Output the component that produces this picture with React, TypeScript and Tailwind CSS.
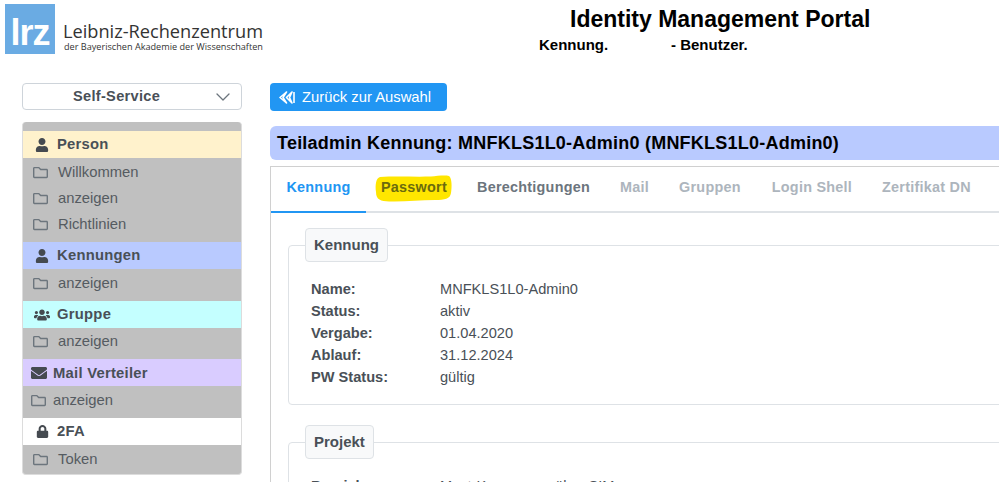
import { FaUser, FaUsers, FaEnvelope, FaLock, FaRegFolder } from "react-icons/fa";
import { ChevronDown } from "lucide-react";
import type { ReactNode } from "react";

const sans = "font-['Liberation_Sans',Arial,sans-serif]";

function Head({ icon, label, bg, tight }: { icon: ReactNode; label: string; bg: string; tight?: boolean }) {
  return (
    <div className={`flex h-[27px] items-center ${bg} text-[14.8px] font-bold tracking-[0.25px] text-[#495057] ${tight ? "gap-[6px] pt-[1px] pl-[8px]" : "gap-[7px] pl-[11px]"}`}>
      <span className="flex w-[16px] justify-center text-[#454a50]">{icon}</span>
      <span>{label}</span>
    </div>
  );
}

function Item({ label, h, tight }: { label: string; h: string; tight?: boolean }) {
  return (
    <div className={`flex items-center text-[14.8px] text-[#555b61] ${h} ${tight ? "gap-[7px] pl-[8px]" : "gap-[10px] pl-[10px]"}`}>
      <FaRegFolder className="h-[15px] w-[15px] text-[#6c757d]" />
      <span>{label}</span>
    </div>
  );
}

function Row({ k, v }: { k: string; v: string }) {
  return (
    <div className="flex h-[22px] items-center text-[14.6px] text-[#495057]">
      <span className="w-[129px] font-bold">{k}</span>
      <span>{v}</span>
    </div>
  );
}

function Legend({ children }: { children: ReactNode }) {
  return (
    <legend className="-ml-[6px] h-[34px] rounded-[4px] border border-[#dee2e6] bg-[#f8f9fa] px-[8px] text-[15px] leading-[32px] font-bold text-[#495057]">
      {children}
    </legend>
  );
}

export default function App() {
  return (
    <div className={`h-[482px] w-[999px] overflow-hidden bg-white ${sans}`}>
      <header className="flex h-[83px]">
        <div className="flex w-[270px] shrink-0 pt-[4px] pl-[5px]">
          <div className="flex h-[50px] w-[50px] shrink-0 items-end justify-center bg-[#6aabe3] pb-[1px] text-[36px] leading-[40px] font-bold tracking-[-1px] text-white">
            lrz
          </div>
          <div className="ml-[8px] pt-[17px] font-['Open_Sans',sans-serif] text-[#333333]">
            <div className="text-[18.2px] leading-[20px] whitespace-nowrap">Leibniz-Rechenzentrum</div>
            <div className="ml-[1px] text-[9.15px] leading-[12px] whitespace-nowrap">der Bayerischen Akademie der Wissenschaften</div>
          </div>
        </div>
        <div className="pt-[5px] pl-[269px] text-black">
          <div className="pl-[31px] text-[23px] leading-[28px] font-bold whitespace-nowrap">Identity Management Portal</div>
          <div className="mt-[3px] flex text-[15px] leading-[18px] font-bold">
            <span className="w-[132px]">Kennung.</span>
            <span>- Benutzer.</span>
          </div>
        </div>
      </header>
      <div className="flex">
        <aside className="ml-[22px] w-[220px] shrink-0">
          <div className="flex h-[27px] items-center justify-between rounded-[4px] border border-[#ced4da] pr-[6px] pl-[50px] text-[14.6px] font-bold tracking-[0.3px] text-[#495057]">
            <span>Self-Service</span>
            <ChevronDown className="h-[24px] w-[24px] text-[#6c757d]" strokeWidth={1.3} />
          </div>
          <nav className="mt-[12px] h-[353px] overflow-hidden rounded-[4px] border-x border-b border-[#dcdcdc] bg-[#c0c0c0] pt-[9px]">
            <Head icon={<FaUser className="h-[14px] w-[14px]" />} label="Person" bg="bg-[#fff2cc]" />
            <div className="pt-[1px] pb-[5px]">
              <Item label="Willkommen" h="h-[26px]" />
              <Item label="anzeigen" h="h-[26px]" />
              <Item label="Richtlinien" h="h-[26px]" />
            </div>
            <Head icon={<FaUser className="h-[14px] w-[14px]" />} label="Kennungen" bg="bg-[#b9caff]" />
            <Item label="anzeigen" h="h-[32px] pb-[4px]" />
            <Head icon={<FaUsers className="h-[18px] w-[18px]" />} label="Gruppe" bg="bg-[#c4ffff]" />
            <Item label="anzeigen" h="h-[31px] pb-[5px]" />
            <Head icon={<FaEnvelope className="h-[16px] w-[16px]" />} label="Mail Verteiler" bg="bg-[#d9ccff]" tight />
            <Item label="anzeigen" h="h-[32px] pb-[4px]" tight />
            <Head icon={<FaLock className="h-[13px] w-[13px]" />} label="2FA" bg="bg-white" />
            <Item label="Token" h="h-[30px] pb-[2px]" />
          </nav>
        </aside>
        <main className="ml-[28px] w-[760px] shrink-0">
          <button className="flex h-[28px] w-[177px] items-center gap-[7px] rounded-[4px] bg-[#2196f3] pl-[9px] text-[14.8px] text-white">
            <svg width="16" height="13" viewBox="0 0 16 13" fill="none" stroke="currentColor" strokeWidth="1.6" strokeLinejoin="round">
              <path d="M7.500 1 1 6.500 7.500 12 4 6.500z" />
              <path d="M13 1 7.500 6.500 13 12 10.500 6.500z" />
              <path d="M15 1v11" />
            </svg>
            <span>Zurück zur Auswahl</span>
          </button>
          <div className="mt-[15px] flex h-[34px] items-center rounded-[6px] bg-[#b9caff] pl-[7px] text-[18px] font-bold tracking-[0.23px] whitespace-nowrap text-black">
            Teiladmin Kennung: MNFKLS1L0-Admin0 (MNFKLS1L0-Admin0)
          </div>
          <div className="mt-[6px] border-t border-l border-[#d0d0d0]">
            <div className="flex h-[46px] items-center border-b-2 border-[#dee2e6] pb-[2px] text-[14.4px] font-bold tracking-[0.25px] whitespace-nowrap">
              <span className="-mb-[4px] flex h-[46px] w-[95px] items-center justify-center border-b-2 border-[#2196f3] pb-[2px] text-[#2196f3]">Kennung</span>
              <span className="relative ml-[15px] w-[66px] text-[#6b6b0e]">
                <svg className="absolute -top-[2px] -left-[6px]" width="77" height="27" viewBox="0 0 77 27" fill="#ffe600">
                  <path d="M5 2 C20 1 40 2 56 1.500 C62 1 70 0 74 1 C77 3 77 12 76 18 C75 24 70 25 60 25 C44 25 30 27 14 26.500 C6 26 1 25 1 17 C0 10 1 3 5 2z" />
                </svg>
                <span className="relative">Passwort</span>
              </span>
              <span className="ml-[30px] text-[#6c757d]">Berechtigungen</span>
              <span className="ml-[30px] text-[#adb5bd]">Mail</span>
              <span className="ml-[30px] text-[#adb5bd]">Gruppen</span>
              <span className="ml-[31px] text-[#adb5bd]">Login Shell</span>
              <span className="ml-[30px] text-[#adb5bd]">Zertifikat DN</span>
            </div>
            <div className="pt-[15px] pl-[17px]">
              <fieldset className="h-[177px] rounded-[4px] border border-[#dee2e6] pl-[22px]">
                <Legend>Kennung</Legend>
                <div className="pt-[17px]">
                  <Row k="Name:" v="MNFKLS1L0-Admin0" />
                  <Row k="Status:" v="aktiv" />
                  <Row k="Vergabe:" v="01.04.2020" />
                  <Row k="Ablauf:" v="31.12.2024" />
                  <Row k="PW Status:" v="gültig" />
                </div>
              </fieldset>
              <fieldset className="mt-[20px] h-[100px] rounded-[4px] border border-[#dee2e6] pl-[22px]">
                <Legend>Projekt</Legend>
                <div className="pt-[17px]">
                  <Row k="Bereich:" v="Mext-Kennungen über SIM" />
                </div>
              </fieldset>
            </div>
          </div>
        </main>
      </div>
    </div>
  );
}
